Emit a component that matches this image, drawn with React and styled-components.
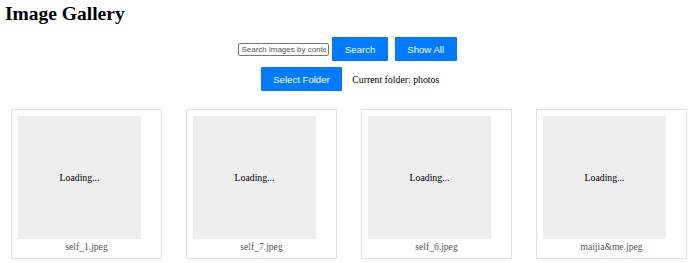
import React, { useState } from "react";
import styled, { createGlobalStyle } from "styled-components";

const GlobalStyle = createGlobalStyle`
  body {
    margin: 0;
    font-family: "Liberation Serif", "Times New Roman", serif;
    background: #fff;
    color: #000;
  }
`;

const images = ["self_1.jpeg", "self_7.jpeg", "self_6.jpeg", "maijia&me.jpeg"];

function App() {
  const [query, setQuery] = useState("");
  return (
    <Page>
      <GlobalStyle />
      <Title>Image Gallery</Title>
      <Controls>
        <Row>
          <SearchInput
            type="text"
            placeholder="Search images by content..."
            value={query}
            onChange={(e) => setQuery(e.target.value)}
          />
          <Button>Search</Button>
          <Button $spaced>Show All</Button>
        </Row>
        <Row>
          <Button>Select Folder</Button>
          <FolderLabel>Current folder: photos</FolderLabel>
        </Row>
      </Controls>
      <Grid>
        {images.map((name) => (
          <Card key={name}>
            <Thumb>Loading...</Thumb>
            <Caption>{name}</Caption>
          </Card>
        ))}
      </Grid>
    </Page>
  );
}

export default App;

const Page = styled.div`
  padding: 3px 5px 0;
`;

const Title = styled.h1`
  font-size: 19.5px;
  font-weight: bold;
  margin: 0 0 12px;
  line-height: 22px;
`;

const Controls = styled.div`
  display: flex;
  flex-direction: column;
  gap: 6px;
`;

const Row = styled.div`
  display: flex;
  justify-content: center;
  align-items: center;
  height: 24px;
  &:first-child {
    padding-right: 5px;
  }
`;

const SearchInput = styled.input`
  box-sizing: border-box;
  width: 91px;
  height: 13px;
  padding: 0 2px;
  border: 1px solid #767676;
  border-radius: 2px;
  font-family: "Liberation Sans", Arial, sans-serif;
  font-size: 8px;
  margin-right: 3px;
  &::placeholder {
    color: #555;
  }
`;

const Button = styled.button`
  height: 24px;
  padding: 0 12.5px;
  margin-left: ${(p) => (p.$spaced ? "7px" : "0")};
  background: #007bff;
  color: #fff;
  border: none;
  border-radius: 1px;
  font-family: "Liberation Sans", Arial, sans-serif;
  font-size: 9.6px;
  cursor: pointer;
`;

const FolderLabel = styled.span`
  margin-left: 10px;
  font-size: 9.8px;
`;

const Grid = styled.div`
  display: grid;
  grid-template-columns: repeat(4, 1fr);
  column-gap: 24px;
  margin: 18px 8px 0 6px;
`;

const Card = styled.div`
  border: 1px solid #e2e2e2;
  padding: 6px 6px 6px;
  height: 150px;
  box-sizing: border-box;
  display: flex;
  flex-direction: column;
`;

const Thumb = styled.div`
  width: 123px;
  height: 123px;
  background: #eeeeee;
  display: flex;
  align-items: center;
  justify-content: center;
  font-size: 9.8px;
  color: #000;
`;

const Caption = styled.div`
  margin-top: 2px;
  text-align: center;
  font-size: 9.6px;
  line-height: 11px;
  color: #555;
`;
